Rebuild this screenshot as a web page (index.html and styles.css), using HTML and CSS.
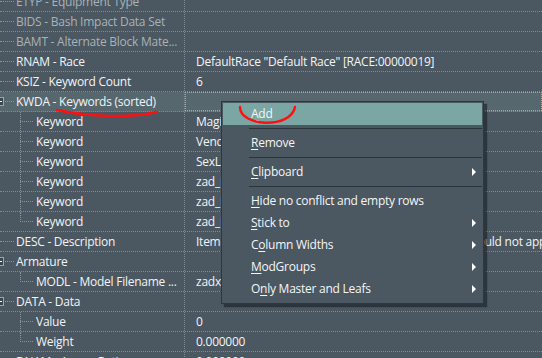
FILE: index.html
```html
<!DOCTYPE html>
<html lang="en">
<head>
  <meta charset="UTF-8">
  <title>Record view</title>
  <link rel="stylesheet" href="styles.css">
</head>
<body>
  <div class="view">
    <div class="rows">
      <div class="row"><div class="name lvl1 dim">ETYP - Equipment Type</div><div class="value"></div></div>
      <div class="row"><div class="name lvl1 dim">BIDS - Bash Impact Data Set</div><div class="value"></div></div>
      <div class="row"><div class="name lvl1 dim">BAMT - Alternate Block Mate...</div><div class="value"></div></div>
      <div class="row"><div class="name lvl1">RNAM - Race</div><div class="value">DefaultRace "Default Race" [RACE:00000019]</div></div>
      <div class="row"><div class="name lvl1">KSIZ - Keyword Count</div><div class="value">6</div></div>
      <div class="row selected"><div class="name lvl1 open">KWDA - Keywords (sorted)</div><div class="value focus"></div></div>
      <div class="row"><div class="name lvl2">Keyword</div><div class="value">MagicDisallowEnchanting [KYWD:000C27BD]</div></div>
      <div class="row"><div class="name lvl2">Keyword</div><div class="value">VendorItemArmor [KYWD:0008F959]</div></div>
      <div class="row"><div class="name lvl2">Keyword</div><div class="value">SexLabNoStrip [KYWD:0200CC6B]</div></div>
      <div class="row"><div class="name lvl2">Keyword</div><div class="value">zad_Lockable [KYWD:03003894]</div></div>
      <div class="row"><div class="name lvl2">Keyword</div><div class="value">zad_DeviousPlug [KYWD:03003331]</div></div>
      <div class="row"><div class="name lvl2 last">Keyword</div><div class="value">zad_InventoryDevice [KYWD:02003330]</div></div>
      <div class="row"><div class="name lvl1">DESC - Description</div><div class="value">Item used by the Devious Devices framework, this should not appear</div></div>
      <div class="row"><div class="name lvl1 open">Armature</div><div class="value"></div></div>
      <div class="row"><div class="name lvl2 last">MODL - Model Filename ...</div><div class="value">zadx_PlugInventory.esp</div></div>
      <div class="row"><div class="name lvl1 open">DATA - Data</div><div class="value"></div></div>
      <div class="row"><div class="name lvl2">Value</div><div class="value">0</div></div>
      <div class="row"><div class="name lvl2 last">Weight</div><div class="value">0.000000</div></div>
      <div class="row"><div class="name lvl1">DNAM - Armor Rating</div><div class="value">0.000000</div></div>
    </div>

    <div class="menu">
      <div class="item hot"><u>A</u>dd</div>
      <div class="sep"></div>
      <div class="item"><u>R</u>emove</div>
      <div class="sep"></div>
      <div class="item sub"><u>C</u>lipboard</div>
      <div class="sep"></div>
      <div class="item"><u>H</u>ide no conflict and empty rows</div>
      <div class="item sub"><u>S</u>tick to</div>
      <div class="item sub">C<u>o</u>lumn Widths</div>
      <div class="item sub"><u>M</u>odGroups</div>
      <div class="item sub">O<u>n</u>ly Master and Leafs</div>
    </div>

    <svg class="marks" width="542" height="358" viewBox="0 0 542 358">
      <path d="M57 110 C 90 117 130 118 157 112" />
      <path d="M240 107 C 240 127 291 129 295 107" />
    </svg>
  </div>
</body>
</html>
```

FILE: styles.css
```css
body {
  margin: 0;
  background: #4b5761;
  font-family: "Open Sans", "Noto Sans", sans-serif;
  font-size: 12px;
  letter-spacing: -0.25px;
  color: #f2f4f5;
  overflow: hidden;
}
.view {
  position: relative;
  width: 542px;
  height: 358px;
  overflow: hidden;
}
.rows {
  margin-top: -8px;
}
.row {
  display: flex;
  height: 19px;
  border-bottom: 1px dotted #7f8a91;
}
.row.selected {
  background: #56676e;
}
.name {
  position: relative;
  box-sizing: border-box;
  width: 185px;
  flex: none;
  border-right: 1px dotted #7f8a91;
  line-height: 19px;
  white-space: nowrap;
  overflow: hidden;
}
.name.dim {
  color: #a9b2b7;
}
.lvl1 {
  padding-left: 16px;
}
.lvl2 {
  padding-left: 36px;
}
.value {
  flex: 1;
  padding-left: 11px;
  line-height: 19px;
  white-space: nowrap;
  overflow: hidden;
}
.value.focus {
  outline: 1px dotted #b59f9c;
  outline-offset: -1px;
}

/* tree lines */
.lvl1::before {
  content: "";
  position: absolute;
  left: 0;
  top: 9px;
  width: 14px;
  border-top: 1px dotted #8a959b;
}
.lvl1.open::before {
  left: 5px;
  width: 9px;
}
.lvl1.open::after {
  content: "";
  position: absolute;
  left: -5px;
  top: 5px;
  width: 7px;
  height: 7px;
  border: 1px solid #9aa4a9;
  background: linear-gradient(#fff, #fff) 0 3px / 6px 1px no-repeat, #3c464d;
}
.lvl2::before {
  content: "";
  position: absolute;
  left: 20px;
  top: 9px;
  width: 13px;
  border-top: 1px dotted #8a959b;
}
.lvl2::after {
  content: "";
  position: absolute;
  left: 20px;
  top: 0;
  bottom: 0;
  border-left: 1px dotted #8a959b;
}
.lvl2.last::after {
  bottom: auto;
  height: 10px;
}

/* context menu */
.menu {
  position: absolute;
  left: 221px;
  top: 101px;
  width: 259px;
  padding: 1px 1px 3px;
  background: #4b5761;
  border: 1px solid #2e373d;
  box-shadow: 3px 3px 1px rgba(20, 26, 30, 0.55);
}
.item {
  position: relative;
  height: 22px;
  line-height: 22px;
  padding-left: 28px;
  color: #f4f6f7;
}
.item.hot {
  background: #7aa7a3;
}
.item.sub::after {
  content: "";
  position: absolute;
  right: 6px;
  top: 7px;
  border-left: 4px solid #fff;
  border-top: 4px solid transparent;
  border-bottom: 4px solid transparent;
}
.item u {
  text-decoration-thickness: 1px;
  text-underline-offset: 2px;
}
.sep {
  height: 1px;
  margin: 3px 0 3px 26px;
  background: #2b3439;
}

/* red annotations */
.marks {
  position: absolute;
  left: 0;
  top: 0;
  pointer-events: none;
}
.marks path {
  fill: none;
  stroke: #ff0f0f;
  stroke-width: 2.4;
  stroke-linecap: round;
}
```
